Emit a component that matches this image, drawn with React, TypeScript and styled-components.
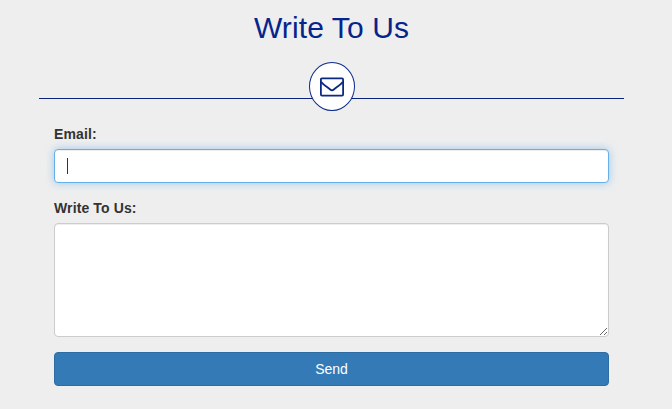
import React from "react";
import styled, { createGlobalStyle } from "styled-components";

const GlobalStyle = createGlobalStyle`
  *, *::before, *::after { box-sizing: border-box; }
  body {
    margin: 0;
    background: #eeeeee;
    color: #333;
    font: 14px/20px "Liberation Sans", Arial, sans-serif;
  }
`;

const Page = styled.main`
  height: 409px;
  padding: 10px 48px 0 39px;
  overflow: hidden;
`;

const Title = styled.h1`
  margin: 0;
  height: 52px;
  color: #06248a;
  font-size: 30px;
  font-weight: 400;
  letter-spacing: 0.1px;
  line-height: 35px;
  text-align: center;
`;

const Divider = styled.div`
  display: grid;
  justify-items: center;
  height: 49px;
  background: linear-gradient(#0a2278, #0a2278) 0 36px / 100% 1px no-repeat;
`;

const Badge = styled.div`
  display: flex;
  align-items: center;
  justify-content: center;
  width: 46px;
  height: 49px;
  border: 1px solid #0a2a8c;
  border-radius: 50%;
  background: #fff;
  color: #0a2a82;
`;

const Form = styled.form`
  display: flex;
  flex-direction: column;
  padding: 13px 15px 0;
`;

const Label = styled.label`
  margin-bottom: 5px;
  font-weight: 700;
  letter-spacing: 0.12px;
`;

const Input = styled.input`
  height: 34px;
  padding: 6px 12px;
  margin-bottom: 15px;
  border: 1px solid #66afe9;
  border-radius: 4px;
  outline: 0;
  background: linear-gradient(#333, #333) 12px 8px / 1px 16px no-repeat #fff;
  box-shadow: inset 0 1px 1px rgba(0, 0, 0, 0.075), 0 0 8px rgba(102, 175, 233, 0.6);
  caret-color: transparent;
  font: inherit;
`;

const TextArea = styled.textarea`
  height: 114px;
  padding: 6px 12px;
  margin: 0 0 15px;
  border: 1px solid #ccc;
  border-radius: 4px;
  background: #fff;
  box-shadow: inset 0 1px 1px rgba(0, 0, 0, 0.075);
  font: inherit;
`;

const SendButton = styled.button`
  height: 34px;
  border: 1px solid #2e6da4;
  border-radius: 4px;
  background: #337ab7;
  color: #fff;
  font: inherit;
`;

const Envelope = () => (
  <svg width="24" height="20" viewBox="0 0 24 20" fill="none" stroke="currentColor" strokeWidth="1.8" strokeLinejoin="round" aria-hidden="true">
    <rect x="0.9" y="1.4" width="22.2" height="17.2" rx="1" />
    <path d="M1 4.7C2.500 7 7.500 10.200 10.200 12.500Q12 14 13.800 12.500C16.500 10.200 21.500 7 23 4.700" />
  </svg>
);

export default function App() {
  return (
    <>
      <GlobalStyle />
      <Page>
        <Title>Write To Us</Title>
        <Divider><Badge><Envelope /></Badge></Divider>
        <Form>
          <Label htmlFor="email">Email:</Label>
          <Input id="email" type="text" autoFocus />
          <Label htmlFor="message">Write To Us:</Label>
          <TextArea id="message" />
          <SendButton type="button">Send</SendButton>
        </Form>
      </Page>
    </>
  );
}
